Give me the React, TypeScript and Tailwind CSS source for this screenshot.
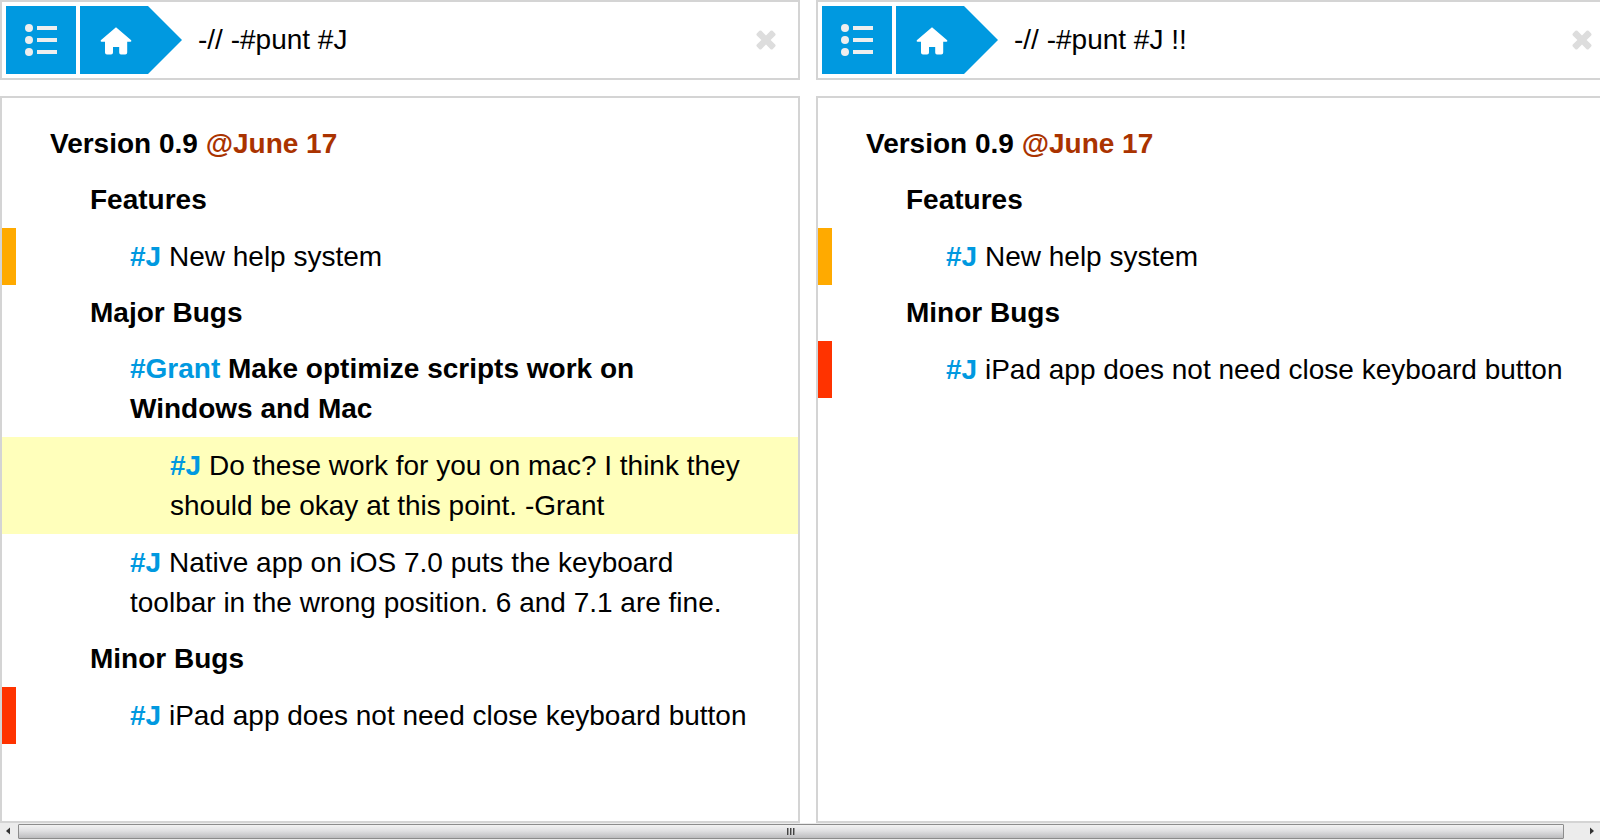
import React from "react";

type Mark = "orange" | "red" | "highlight";

interface Item {
  level: 0 | 1 | 2 | 3;
  tag?: string;
  text: string;
  date?: string;
  bold?: boolean;
  mark?: Mark;
}

interface PaneData {
  id: string;
  query: string;
  items: Item[];
}

const panes: PaneData[] = [
  {
    id: "left",
    query: "-// -#punt #J",
    items: [
      { level: 0, text: "Version 0.9", date: "@June 17", bold: true },
      { level: 1, text: "Features", bold: true },
      { level: 2, tag: "#J", text: "New help system", mark: "orange" },
      { level: 1, text: "Major Bugs", bold: true },
      { level: 2, tag: "#Grant", text: "Make optimize scripts work on Windows and Mac", bold: true },
      {
        level: 3,
        tag: "#J",
        text: "Do these work for you on mac? I think they should be okay at this point. -Grant",
        mark: "highlight",
      },
      {
        level: 2,
        tag: "#J",
        text: "Native app on iOS 7.0 puts the keyboard toolbar in the wrong position. 6 and 7.1 are fine.",
      },
      { level: 1, text: "Minor Bugs", bold: true },
      { level: 2, tag: "#J", text: "iPad app does not need close keyboard button", mark: "red" },
    ],
  },
  {
    id: "right",
    query: "-// -#punt #J !!",
    items: [
      { level: 0, text: "Version 0.9", date: "@June 17", bold: true },
      { level: 1, text: "Features", bold: true },
      { level: 2, tag: "#J", text: "New help system", mark: "orange" },
      { level: 1, text: "Minor Bugs", bold: true },
      { level: 2, tag: "#J", text: "iPad app does not need close keyboard button", mark: "red" },
    ],
  },
];

const indents = ["pl-[34px]", "pl-[74px]", "pl-[114px]", "pl-[154px]"];

const markColors: Record<Mark, string> = {
  orange: "bg-[#ffaa00]",
  red: "bg-[#ff3300]",
  highlight: "",
};

function ListIcon() {
  return (
    <svg width="32" height="32" viewBox="0 0 32 32" fill="#eeeeee" aria-hidden="true">
      <circle cx="4" cy="4" r="4" />
      <circle cx="4" cy="16" r="4" />
      <circle cx="4" cy="28" r="4" />
      <path d="M12 2h20v4H12zM12 14h20v4H12zM12 26h20v4H12z" />
    </svg>
  );
}

function HomeIcon() {
  return (
    <svg width="32" height="28" viewBox="0 0 32 28" fill="#ffffff" aria-hidden="true">
      <path d="M16 0.2 31.2 13.2Q31.8 14.2 30.6 14.8H27.2V25.6Q27.2 27.6 25.2 27.6H21Q19.2 27.6 19.2 25.6V20H13V25.6Q13 27.6 11 27.6H7Q5 27.6 5 25.6V14.8H1.4Q0.2 14.2 0.8 13.2Z" />
    </svg>
  );
}

function CloseIcon() {
  return (
    <svg width="20" height="20" viewBox="0 0 20 20" fill="#dddddd" aria-hidden="true">
      <path d="M3.4 0.8Q4.4 0 5.4 0.8L10 5.4 14.6 0.8Q15.6 0 16.6 0.8L19.2 3.4Q20 4.4 19.2 5.4L14.6 10 19.2 14.6Q20 15.6 19.2 16.6L16.6 19.2Q15.6 20 14.6 19.2L10 14.6 5.4 19.2Q4.4 20 3.4 19.2L0.8 16.6Q0 15.6 0.8 14.6L5.4 10 0.8 5.4Q0 4.4 0.8 3.4Z" />
    </svg>
  );
}

function Row({ item }: { item: Item }) {
  return (
    <li className={`flex ${item.mark === "highlight" ? "bg-[#ffffbb]" : ""}`}>
      <span className={`w-3.5 shrink-0 ${item.mark ? markColors[item.mark] : ""}`} />
      <p
        className={`min-w-0 flex-1 pr-12 pb-2 leading-10 ${indents[item.level]} ${
          item.bold ? "pt-2 font-bold" : "pt-[9px]"
        }`}
      >
        {item.tag && <a href="#tag" className="font-bold text-[#0099e0]">{item.tag}</a>}
        {item.tag && " "}
        {item.text}
        {item.date && " "}
        {item.date && <span className="text-[#aa3300]">{item.date}</span>}
      </p>
    </li>
  );
}

function Pane({ pane }: { pane: PaneData }) {
  return (
    <section className="flex w-1/2 shrink-0 flex-col gap-4">
      <header className="flex items-center border-2 border-[#d4d4d4] bg-white p-1">
        <button type="button" aria-label="Menu" className="mr-1 flex h-[68px] w-[70px] shrink-0 items-center justify-center bg-[#0099e0]">
          <ListIcon />
        </button>
        <button type="button" aria-label="Home" className="flex h-[68px] shrink-0">
          <span className="flex h-full w-[68px] items-center justify-center bg-[#0099e0] pt-0.5 pl-1">
            <HomeIcon />
          </span>
          <svg width="34" height="68" viewBox="0 0 34 68" fill="#0099e0" aria-hidden="true">
            <path d="M0 0 34 34 0 68Z" />
          </svg>
        </button>
        <input
          type="text"
          aria-label="Search"
          defaultValue={pane.query}
          className="ml-4 min-w-0 flex-1 bg-transparent text-[28px] leading-10 text-black outline-none"
        />
        <button type="button" aria-label="Close" className="flex h-10 shrink-0 items-center pr-[18px] pl-4">
          <CloseIcon />
        </button>
      </header>
      <ul className="flex-1 overflow-hidden border-2 border-[#d4d4d4] bg-white pt-[18px]">
        {pane.items.map((item) => (
          <Row key={item.text} item={item} />
        ))}
      </ul>
    </section>
  );
}

function ScrollBar() {
  return (
    <div className="flex h-[17px] shrink-0 items-stretch bg-[#ececec] pt-px">
      <button type="button" aria-label="Scroll left" className="flex w-[18px] shrink-0 items-center justify-center pr-0.5 pb-0.5">
        <svg width="4" height="8" viewBox="0 0 4 8" fill="#333333" aria-hidden="true">
          <path d="M4 0.5V7.5L0 4Z" />
        </svg>
      </button>
      <div className="mb-px flex flex-1 items-center justify-center rounded-[1px] border border-[#8c8c8c] bg-linear-to-b from-[#f2f2f2] from-0% via-[#e0e0e2] via-45% to-[#bcbcbe]">
        <svg width="8" height="7" viewBox="0 0 8 7" aria-hidden="true">
          <path d="M0 0h1v7H0zM3 0h1v7H3zM6 0h1v7H6z" fill="#444444" />
          <path d="M1 0h1v7H1zM4 0h1v7H4zM7 0h1v7H7z" fill="#999999" />
        </svg>
      </div>
      <span className="w-5 shrink-0" />
      <button type="button" aria-label="Scroll right" className="flex w-4 shrink-0 items-center justify-center pb-0.5">
        <svg width="4" height="8" viewBox="0 0 4 8" fill="#333333" aria-hidden="true">
          <path d="M0 0.5V7.5L4 4Z" />
        </svg>
      </button>
    </div>
  );
}

export default function App() {
  return (
    <div className="flex h-screen flex-col overflow-hidden bg-white font-['Liberation_Sans',Arial,sans-serif] text-[28px] text-black">
      <main className="flex min-h-0 flex-1 gap-4 overflow-hidden">
        {panes.map((pane) => (
          <Pane key={pane.id} pane={pane} />
        ))}
      </main>
      <ScrollBar />
    </div>
  );
}
